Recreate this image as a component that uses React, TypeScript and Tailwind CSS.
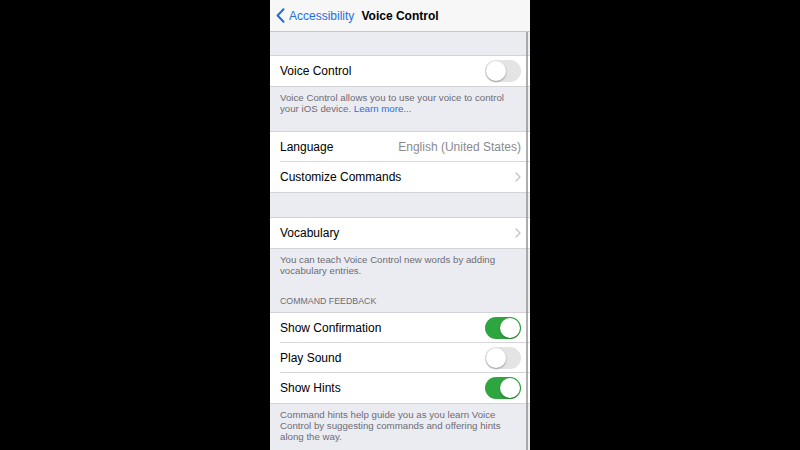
import React from "react";

const Toggle = ({ on }: { on: boolean }) => (
  <div
    className={`w-[36px] h-[22px] rounded-full p-[1px] flex ${
      on ? "bg-[#2ea63f] justify-end" : "bg-[#e4e4e6] justify-start"
    }`}
  >
    <div className="w-[20px] h-[20px] rounded-full bg-white shadow-[0_1px_2px_rgba(0,0,0,0.35)]" />
  </div>
);

const Chevron = () => (
  <svg width="6" height="10" viewBox="0 0 6 10" fill="none">
    <path d="M1 1l4 4-4 4" stroke="#c4c4c8" strokeWidth="1.3" strokeLinecap="round" strokeLinejoin="round" />
  </svg>
);

const Row = ({
  label,
  right,
  last,
}: {
  label: string;
  right?: React.ReactNode;
  last?: boolean;
}) => (
  <div className="h-[30px] pl-[10px] flex">
    <div
      className={`flex-1 flex items-center justify-between pr-[9px] ${
        last ? "" : "border-b border-[#d6d6da]"
      }`}
    >
      <span className="text-[12px] text-black">{label}</span>
      {right}
    </div>
  </div>
);

const Group = ({ children }: { children: React.ReactNode }) => (
  <div className="bg-white border-y border-[#d4d4d8]">{children}</div>
);

const Footer = ({ children, className = "" }: { children: React.ReactNode; className?: string }) => (
  <p className={`pl-[10px] pr-[12px] text-[9.7px] leading-[11px] text-[#6d6d72] ${className}`}>{children}</p>
);

export default function App() {
  return (
    <div
      className="w-[800px] h-[450px] bg-black flex justify-center"
      style={{ fontFamily: '"Liberation Sans", Arial, sans-serif' }}
    >
      <div className="w-[260px] h-full bg-[#ebebf2] relative overflow-hidden flex flex-col">
        <div className="h-[32px] shrink-0 bg-[#f7f7f7] border-b border-[#c6c6ca] grid grid-cols-[1fr_auto_1fr] items-center">
          <div className="flex items-center pl-[6px] gap-[4px] text-[#1f6fde]">
            <svg width="9" height="15" viewBox="0 0 9 15" fill="none">
              <path d="M7.5 1.2L1.6 7.5l5.9 6.3" stroke="#1f6fde" strokeWidth="2" strokeLinecap="round" strokeLinejoin="round" />
            </svg>
            <span className="text-[12px]">Accessibility</span>
          </div>
          <span className="text-[12px] font-bold text-black">Voice Control</span>
          <div />
        </div>

        <div className="h-[23px] shrink-0" />
        <Group>
          <Row label="Voice Control" right={<Toggle on={false} />} last />
        </Group>
        <Footer className="pt-[5px] h-[44px] shrink-0">
          Voice Control allows you to use your voice to control your iOS device.{" "}
          <span className="text-[#1f6fde]">Learn more...</span>
        </Footer>

        <Group>
          <Row
            label="Language"
            right={<span className="text-[12px] text-[#8a8a8e]">English (United States)</span>}
          />
          <Row label="Customize Commands" right={<Chevron />} last />
        </Group>
        <div className="h-[24px] shrink-0" />
        <Group>
          <Row label="Vocabulary" right={<Chevron />} last />
        </Group>
        <Footer className="pt-[5px] h-[37px] shrink-0">
          You can teach Voice Control new words by adding vocabulary entries.
        </Footer>
        <p className="px-[10px] h-[26px] shrink-0 text-[8.8px] leading-[11px] text-[#6d6d72] uppercase flex items-end pb-[5px]">
          Command Feedback
        </p>
        <Group>
          <Row label="Show Confirmation" right={<Toggle on />} />
          <Row label="Play Sound" right={<Toggle on={false} />} />
          <Row label="Show Hints" right={<Toggle on />} last />
        </Group>
        <Footer className="pt-[5px]">
          Command hints help guide you as you learn Voice Control by suggesting commands and offering hints
          along the way.
        </Footer>

        <div className="absolute right-[2px] top-[32px] bottom-0 w-[2px] bg-[#8c8c8c] opacity-70" />
      </div>
    </div>
  );
}
